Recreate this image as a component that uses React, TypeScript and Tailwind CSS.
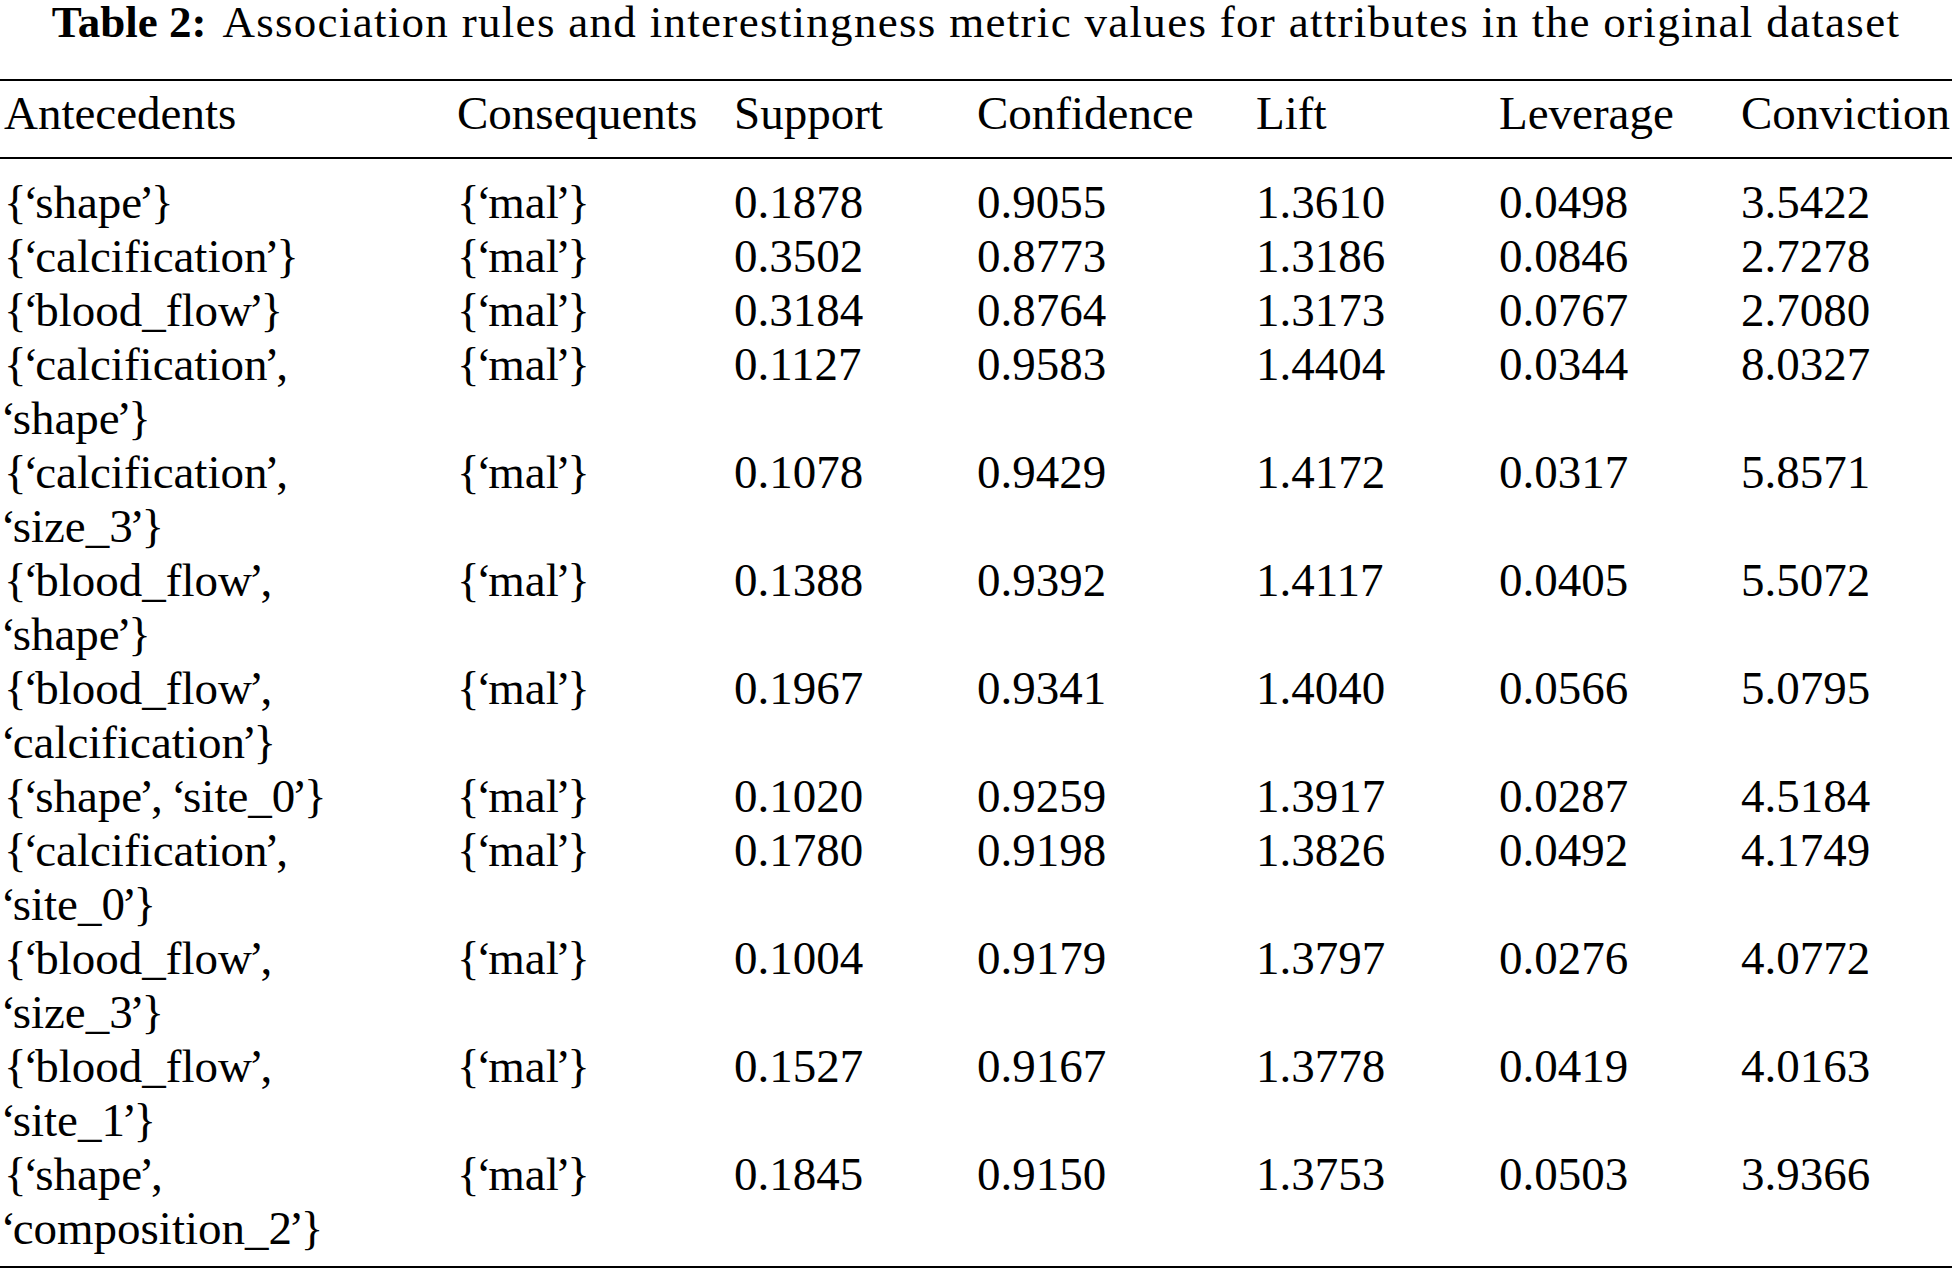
import React from 'react'

type Rule = {
  antecedents: string[]
  consequents: string
  support: string
  confidence: string
  lift: string
  leverage: string
  conviction: string
}

const rules: Rule[] = [
  { antecedents: ['{‘shape’}'], consequents: '{‘mal’}', support: '0.1878', confidence: '0.9055', lift: '1.3610', leverage: '0.0498', conviction: '3.5422' },
  { antecedents: ['{‘calcification’}'], consequents: '{‘mal’}', support: '0.3502', confidence: '0.8773', lift: '1.3186', leverage: '0.0846', conviction: '2.7278' },
  { antecedents: ['{‘blood_flow’}'], consequents: '{‘mal’}', support: '0.3184', confidence: '0.8764', lift: '1.3173', leverage: '0.0767', conviction: '2.7080' },
  { antecedents: ['{‘calcification’,', '‘shape’}'], consequents: '{‘mal’}', support: '0.1127', confidence: '0.9583', lift: '1.4404', leverage: '0.0344', conviction: '8.0327' },
  { antecedents: ['{‘calcification’,', '‘size_3’}'], consequents: '{‘mal’}', support: '0.1078', confidence: '0.9429', lift: '1.4172', leverage: '0.0317', conviction: '5.8571' },
  { antecedents: ['{‘blood_flow’,', '‘shape’}'], consequents: '{‘mal’}', support: '0.1388', confidence: '0.9392', lift: '1.4117', leverage: '0.0405', conviction: '5.5072' },
  { antecedents: ['{‘blood_flow’,', '‘calcification’}'], consequents: '{‘mal’}', support: '0.1967', confidence: '0.9341', lift: '1.4040', leverage: '0.0566', conviction: '5.0795' },
  { antecedents: ['{‘shape’, ‘site_0’}'], consequents: '{‘mal’}', support: '0.1020', confidence: '0.9259', lift: '1.3917', leverage: '0.0287', conviction: '4.5184' },
  { antecedents: ['{‘calcification’,', '‘site_0’}'], consequents: '{‘mal’}', support: '0.1780', confidence: '0.9198', lift: '1.3826', leverage: '0.0492', conviction: '4.1749' },
  { antecedents: ['{‘blood_flow’,', '‘size_3’}'], consequents: '{‘mal’}', support: '0.1004', confidence: '0.9179', lift: '1.3797', leverage: '0.0276', conviction: '4.0772' },
  { antecedents: ['{‘blood_flow’,', '‘site_1’}'], consequents: '{‘mal’}', support: '0.1527', confidence: '0.9167', lift: '1.3778', leverage: '0.0419', conviction: '4.0163' },
  { antecedents: ['{‘shape’,', '‘composition_2’}'], consequents: '{‘mal’}', support: '0.1845', confidence: '0.9150', lift: '1.3753', leverage: '0.0503', conviction: '3.9366' },
]

const headers = ['Antecedents', 'Consequents', 'Support', 'Confidence', 'Lift', 'Leverage', 'Conviction']

const cols = 'grid grid-cols-[453px_277px_243px_279px_243px_242px_1fr] pl-[4px]'

// the typeset quotes sit tighter than Liberation's
function Quoted({ text }: { text: string }) {
  return (
    <>
      {text.split(/([‘’])/).map((part, i) =>
        part === '‘' || part === '’' ? (
          <span key={i} className="mx-[-3.5px]">
            {part}
          </span>
        ) : (
          <React.Fragment key={i}>{part}</React.Fragment>
        )
      )}
    </>
  )
}

export default function App() {
  return (
    <div className="min-h-screen bg-white font-['Liberation_Serif','Times_New_Roman',serif] text-black">
      <div className="w-[1952px]">
        <h2 className="whitespace-nowrap pt-[2px] text-center text-[45px] leading-[40px] tracking-[1.3px]">
          <span className="font-bold tracking-normal">Table 2:</span>
          <span className="ml-[16px]">
            Association rules and interestingness metric values for attributes in the original dataset
          </span>
        </h2>

        <div className="mt-[37px] border-t-2 border-black" />

        <div className={`${cols} pt-[5px] pb-[17px] text-[47px] leading-[54px]`}>
          {headers.map((h) => (
            <div key={h}>{h}</div>
          ))}
        </div>

        <div className="border-t-2 border-black" />

        <div className="pt-[16px] pb-[11px] text-[47px] leading-[54px]">
          {rules.map((r, i) => (
            <div key={i} className={cols}>
              <div>
                {r.antecedents.map((line, j) => (
                  <div key={j}>
                    <Quoted text={line} />
                  </div>
                ))}
              </div>
              <div>
                <Quoted text={r.consequents} />
              </div>
              <div>{r.support}</div>
              <div>{r.confidence}</div>
              <div>{r.lift}</div>
              <div>{r.leverage}</div>
              <div>{r.conviction}</div>
            </div>
          ))}
        </div>

        <div className="border-t-2 border-black" />
      </div>
    </div>
  )
}
